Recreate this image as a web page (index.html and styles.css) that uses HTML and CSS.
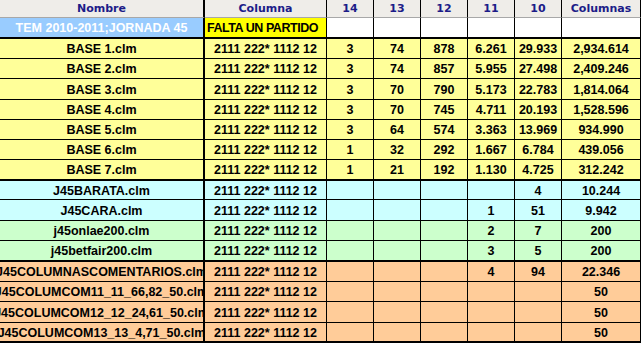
FILE: index.html
```html
<!DOCTYPE html>
<html lang="es">
<head>
<meta charset="utf-8">
<title>Jornada 45</title>
<link rel="stylesheet" href="styles.css">
</head>
<body>
<div class="sheet">
  <div class="row head h18">
    <div class="c">Nombre</div><div class="c">Columna</div><div class="c">14</div><div class="c">13</div><div class="c">12</div><div class="c">11</div><div class="c">10</div><div class="c">Columnas</div>
  </div>
  <div class="row info h21 thick">
    <div class="c title">TEM 2010-2011;JORNADA 45</div><div class="c falta">FALTA UN PARTIDO</div><div class="c"></div><div class="c"></div><div class="c"></div><div class="c"></div><div class="c"></div><div class="c"></div>
  </div>
  <div class="row base h20">
    <div class="c">BASE 1.clm</div><div class="c">2111 222* 1112 12</div><div class="c">3</div><div class="c">74</div><div class="c">878</div><div class="c">6.261</div><div class="c">29.933</div><div class="c">2,934.614</div>
  </div>
  <div class="row base h20">
    <div class="c">BASE 2.clm</div><div class="c">2111 222* 1112 12</div><div class="c">3</div><div class="c">74</div><div class="c">857</div><div class="c">5.955</div><div class="c">27.498</div><div class="c">2,409.246</div>
  </div>
  <div class="row base h21">
    <div class="c">BASE 3.clm</div><div class="c">2111 222* 1112 12</div><div class="c">3</div><div class="c">70</div><div class="c">790</div><div class="c">5.173</div><div class="c">22.783</div><div class="c">1,814.064</div>
  </div>
  <div class="row base h20">
    <div class="c">BASE 4.clm</div><div class="c">2111 222* 1112 12</div><div class="c">3</div><div class="c">70</div><div class="c">745</div><div class="c">4.711</div><div class="c">20.193</div><div class="c">1,528.596</div>
  </div>
  <div class="row base h20">
    <div class="c">BASE 5.clm</div><div class="c">2111 222* 1112 12</div><div class="c">3</div><div class="c">64</div><div class="c">574</div><div class="c">3.363</div><div class="c">13.969</div><div class="c">934.990</div>
  </div>
  <div class="row base h20">
    <div class="c">BASE 6.clm</div><div class="c">2111 222* 1112 12</div><div class="c">1</div><div class="c">32</div><div class="c">292</div><div class="c">1.667</div><div class="c">6.784</div><div class="c">439.056</div>
  </div>
  <div class="row base h21 thick">
    <div class="c">BASE 7.clm</div><div class="c">2111 222* 1112 12</div><div class="c">1</div><div class="c">21</div><div class="c">192</div><div class="c">1.130</div><div class="c">4.725</div><div class="c">312.242</div>
  </div>
  <div class="row cyan h19">
    <div class="c">J45BARATA.clm</div><div class="c">2111 222* 1112 12</div><div class="c"></div><div class="c"></div><div class="c"></div><div class="c"></div><div class="c">4</div><div class="c">10.244</div>
  </div>
  <div class="row cyan h21">
    <div class="c">J45CARA.clm</div><div class="c">2111 222* 1112 12</div><div class="c"></div><div class="c"></div><div class="c"></div><div class="c">1</div><div class="c">51</div><div class="c">9.942</div>
  </div>
  <div class="row green h20">
    <div class="c">j45onlae200.clm</div><div class="c">2111 222* 1112 12</div><div class="c"></div><div class="c"></div><div class="c"></div><div class="c">2</div><div class="c">7</div><div class="c">200</div>
  </div>
  <div class="row green h21 thick">
    <div class="c">j45betfair200.clm</div><div class="c">2111 222* 1112 12</div><div class="c"></div><div class="c"></div><div class="c"></div><div class="c">3</div><div class="c">5</div><div class="c">200</div>
  </div>
  <div class="row peach h20">
    <div class="c">J45COLUMNASCOMENTARIOS.clm</div><div class="c">2111 222* 1112 12</div><div class="c"></div><div class="c"></div><div class="c"></div><div class="c">4</div><div class="c">94</div><div class="c">22.346</div>
  </div>
  <div class="row peach h20">
    <div class="c">J45COLUMCOM11_11_66,82_50.clm</div><div class="c">2111 222* 1112 12</div><div class="c"></div><div class="c"></div><div class="c"></div><div class="c"></div><div class="c"></div><div class="c">50</div>
  </div>
  <div class="row peach h21">
    <div class="c">J45COLUMCOM12_12_24,61_50.clm</div><div class="c">2111 222* 1112 12</div><div class="c"></div><div class="c"></div><div class="c"></div><div class="c"></div><div class="c"></div><div class="c">50</div>
  </div>
  <div class="row peach h20 thick">
    <div class="c">J45COLUMCOM13_13_4,71_50.clm</div><div class="c">2111 222* 1112 12</div><div class="c"></div><div class="c"></div><div class="c"></div><div class="c"></div><div class="c"></div><div class="c">50</div>
  </div>
</div>
</body>
</html>
```
FILE: styles.css
```css
html, body {
  margin: 0;
  padding: 0;
  background: #ffffff;
}
body {
  font-family: "Liberation Sans", Arial, sans-serif;
  font-weight: bold;
  font-size: 12.5px;
  color: #000;
}
.sheet {
  width: 641px;
  overflow: hidden;
}
.row {
  display: grid;
  grid-template-columns: 205px 122px 47px 47px 47px 47px 47px 79px;
}
.h18 { height: 18px; }
.h19 { height: 19px; }
.h20 { height: 20px; }
.h21 { height: 21px; }
.c {
  box-sizing: border-box;
  display: flex;
  align-items: center;
  justify-content: center;
  white-space: nowrap;
  overflow: hidden;
  border-right: 1px solid #000;
  border-bottom: 1px solid #000;
  padding-top: 1px;
}
.c:first-child {
  border-right-width: 2px;
}
.thick .c {
  border-bottom-width: 2px;
}
.head {
  background: #efede9;
}
.head .c {
  font-family: "DejaVu Sans", Verdana, sans-serif;
  font-size: 11px;
  color: #1c1c88;
  border-bottom-color: #a8a8a8;
  padding-top: 0;
}
.info {
  background: #ffffff;
}
.info .title {
  background: #99ccff;
  color: #ffffff;
}
.info .falta {
  background: #ffff00;
  justify-content: flex-start;
  padding-left: 2px;
  letter-spacing: -0.45px;
}
.base { background: #ffff99; }
.cyan { background: #ccffff; }
.green { background: #ccffcc; }
.peach { background: #ffcc99; }
```
